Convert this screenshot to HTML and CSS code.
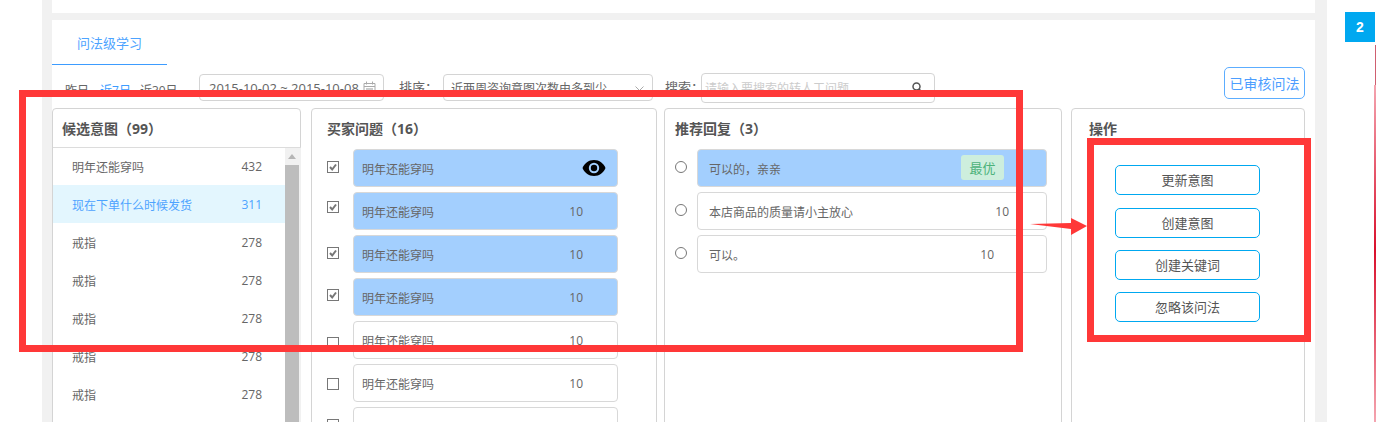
FILE: index.html
```html
<!DOCTYPE html>
<html lang="zh-CN">
<head>
<meta charset="utf-8">
<title>问法级学习</title>
<link rel="stylesheet" href="styles.css">
</head>
<body>
<div class="page">
  <main class="content">
    <div class="top-card"></div>
    <section class="main-card">
      <nav class="tabs"><span class="tab">问法级学习</span></nav>
      <div class="toolbar">
        <div class="ranges"><span>昨日</span><span class="on">近7日</span><span>近30日</span></div>
        <div class="field date">2015-10-02 ~ 2015-10-08
          <svg class="cal" viewBox="0 0 13 13" width="13" height="13"><path d="M1 2.500h11v10H1zM1 5.500h11M3.500 .5v3M9.500 .5v3" fill="none" stroke="#aaa"/><path d="M3 7h7v4H3z" fill="#ccc"/></svg>
        </div>
        <label class="lab sort-lab">排序：</label>
        <div class="field select">近两周咨询意图次数由多到少
          <svg class="chev" viewBox="0 0 9 5" width="9" height="5"><path d="M.5 .5l4 4 4-4" fill="none" stroke="#aaa"/></svg>
        </div>
        <label class="lab search-lab">搜索：</label>
        <div class="field search">请输入要搜索的转人工问题
          <svg class="glass" viewBox="0 0 11 11" width="11" height="11"><circle cx="4.500" cy="4.500" r="3.500" fill="none" stroke="#555" stroke-width="1.500"/><path d="M7 7l3.500 3.500" stroke="#555" stroke-width="1.500"/></svg>
        </div>
        <button class="audited">已审核问法</button>
      </div>
      <div class="panels">
        <section class="panel intents">
          <h3>候选意图（99）</h3>
          <div class="intent-box">
            <ul class="intent-list">
              <li><span>明年还能穿吗</span><b>432</b></li>
              <li class="active"><span>现在下单什么时候发货</span><b>311</b></li>
              <li><span>戒指</span><b>278</b></li>
              <li><span>戒指</span><b>278</b></li>
              <li><span>戒指</span><b>278</b></li>
              <li><span>戒指</span><b>278</b></li>
              <li><span>戒指</span><b>278</b></li>
            </ul>
            <div class="scrollbar"><div class="scroll-up"><i></i></div><div class="thumb"></div></div>
          </div>
        </section>
        <section class="panel questions">
          <h3>买家问题（16）</h3>
          <div class="rows">
            <div class="row"><span class="check"><svg viewBox="0 0 10 10" width="10" height="10"><path d="M2 5l2.200 2.500L8 2.500" fill="none" stroke="#777" stroke-width="2"/></svg></span><div class="item sel"><span>明年还能穿吗</span><svg class="eye" viewBox="0 0 24 18" width="24" height="18"><path d="M12 1C6.500 1 2.500 4.500 .5 9c2 4.500 6 8 11.500 8s9.500-3.500 11.500-8C21.500 4.500 17.500 1 12 1z" fill="#000"/><circle cx="12" cy="9" r="5.200" fill="#a3cffe"/><circle cx="12" cy="9" r="3.200" fill="#000"/></svg></div></div>
            <div class="row"><span class="check"><svg viewBox="0 0 10 10" width="10" height="10"><path d="M2 5l2.200 2.500L8 2.500" fill="none" stroke="#777" stroke-width="2"/></svg></span><div class="item sel"><span>明年还能穿吗</span><b>10</b></div></div>
            <div class="row"><span class="check"><svg viewBox="0 0 10 10" width="10" height="10"><path d="M2 5l2.200 2.500L8 2.500" fill="none" stroke="#777" stroke-width="2"/></svg></span><div class="item sel"><span>明年还能穿吗</span><b>10</b></div></div>
            <div class="row"><span class="check"><svg viewBox="0 0 10 10" width="10" height="10"><path d="M2 5l2.200 2.500L8 2.500" fill="none" stroke="#777" stroke-width="2"/></svg></span><div class="item sel"><span>明年还能穿吗</span><b>10</b></div></div>
            <div class="row"><span class="check"></span><div class="item"><span>明年还能穿吗</span><b>10</b></div></div>
            <div class="row"><span class="check"></span><div class="item"><span>明年还能穿吗</span><b>10</b></div></div>
            <div class="row"><span class="check"></span><div class="item"></div></div>
          </div>
        </section>
        <section class="panel replies">
          <h3>推荐回复（3）</h3>
          <div class="rows">
            <div class="row"><span class="radio"></span><div class="item sel"><span>可以的，亲亲</span><em class="best">最优</em></div></div>
            <div class="row"><span class="radio"></span><div class="item"><span>本店商品的质量请小主放心</span><b>10</b></div></div>
            <div class="row"><span class="radio"></span><div class="item short"><span>可以。</span><b>10</b></div></div>
          </div>
        </section>
        <section class="panel actions">
          <h3>操作</h3>
          <div class="buttons">
            <button>更新意图</button>
            <button>创建意图</button>
            <button>创建关键词</button>
            <button>忽略该问法</button>
          </div>
        </section>
      </div>
    </section>
  </main>
  <aside class="rail">
    <div class="step">2</div>
    <div class="line"></div>
  </aside>
</div>
<div class="mark mark-a"></div>
<div class="mark mark-b"></div>
<svg class="arrow" viewBox="0 0 58 18" width="58" height="18"><path d="M0 6L41 5V0L57 8 41 17V11z" fill="#ff3838"/></svg>
</body>
</html>
```
FILE: styles.css
```css
* { box-sizing: border-box; }
html, body { margin: 0; height: 422px; overflow: hidden; background: #fff; }
body { position: relative; font: 12px/1.4 "Open Sans", "Noto Sans CJK SC", sans-serif; color: #666; }
ul, h3 { margin: 0; padding: 0; }
li { list-style: none; }
.page { display: flex; height: 422px; padding-left: 42px; }

.content { width: 1285px; background: #f1f1f1; padding: 0 12px 0 10px; display: flex; flex-direction: column; }
.top-card { height: 13px; background: #fff; flex: none; }
.main-card { margin-top: 7px; flex: 1; background: #fff; padding-right: 10px; overflow: hidden; }

.tabs { height: 45px; }
.tab { display: block; width: 115px; height: 45px; padding: 14px 0 0 25px; border-bottom: 1px solid #3d9cff; color: #4da3ff; font-size: 13px; line-height: 18px; }

.toolbar { height: 43px; display: flex; align-items: flex-start; font-size: 12px; }
.ranges { display: flex; gap: 9px; margin: 17px 0 0 13px; width: 134px; color: #666; line-height: 17px; }
.ranges span:first-child { margin-right: 2px; }
.ranges .on { color: #3d9cff; }
.field { position: relative; border: 1px solid #d4d4d4; border-radius: 4px; margin-top: 9px; height: 27px; line-height: 27px; white-space: nowrap; flex: none; }
.date { width: 185px; padding-left: 9px; font-size: 13px; color: #666; }
.cal { position: absolute; right: 7px; top: 6px; }
.lab { flex: none; margin-top: 13px; font-size: 13px; line-height: 18px; color: #666; white-space: nowrap; }
.sort-lab { margin-left: 15px; width: 44px; }
.select { width: 210px; padding-left: 7px; }
.chev { position: absolute; right: 8px; top: 11px; }
.search-lab { margin-left: 12px; width: 36px; }
.search { width: 234px; height: 30px; margin-top: 8px; padding-left: 3px; line-height: 30px; color: #ccc; }
.glass { position: absolute; right: 11px; top: 8px; }
.audited { margin: 2px 0 0 auto; width: 81px; height: 32px; padding: 0; background: #fff; border: 1px solid #5cadff; border-radius: 5px; color: #4d9eff; font: 14px/30px "Noto Sans CJK SC", sans-serif; }

.panels { display: flex; height: 400px; }
.panel { border: 1px solid #d4d4d4; border-radius: 4px; flex: none; background: #fff; }
.panel h3 { font-size: 14px; font-weight: 700; line-height: 20px; color: #555; }
.intents { width: 249px; }
.questions { width: 346px; margin-left: 10px; }
.replies { width: 398px; margin-left: 7px; }
.actions { width: 234px; margin-left: 9px; }
.intents h3 { padding: 10px 0 0 9px; height: 38px; }
.questions h3, .replies h3 { padding: 10px 0 0 15px; height: 40px; }
.replies h3 { padding-left: 10px; }
.actions h3 { padding: 10px 0 0 17px; height: 56px; }

.intent-box { display: flex; height: 300px; border-top: 1px solid #dcdcdc; margin-right: -1px; overflow: hidden; }
.intent-list { width: 232px; flex: none; }
.intent-list li { height: 38px; display: flex; justify-content: space-between; align-items: center; padding: 2px 23px 0 19px; color: #666; }
.intent-list li:first-child { height: 37px; }
.intent-list li span, .item span { font-family: "Noto Sans CJK SC", sans-serif; }
.intent-list b, .item b { font-weight: 400; font-size: 12px; }
.intent-list li.active { background: #e3f6fe; color: #4da3ff; }
.scrollbar { width: 16px; background: #f1f1f1; flex: none; padding-right: 2px; }
.scroll-up { height: 17px; display: flex; justify-content: center; padding-top: 6px; }
.scroll-up i { width: 0; height: 0; border: 4px solid transparent; border-top: 0; border-bottom: 5px solid #b5b5b5; }
.thumb { height: 283px; background: #bdbdbd; }

.rows { display: flex; flex-direction: column; gap: 5px; }
.row { display: flex; align-items: flex-start; height: 38px; }
.questions .row { padding-left: 15px; }
.replies .row { padding-left: 10px; }
.check { flex: none; width: 12px; height: 12px; margin-top: 12px; border: 1px solid #777; background: #fff; display: flex; }
.row:nth-child(2) .check { margin-top: 9px; }
.row:nth-child(3) .check { margin-top: 12px; }
.row:nth-child(4) .check { margin-top: 11px; }
.row:nth-child(5) .check { margin-top: 16px; }
.row:nth-child(6) .check { margin-top: 14px; }
.row:nth-child(7) .check { margin-top: 12px; }
.radio { flex: none; width: 12px; height: 12px; margin-top: 12px; border: 1px solid #777; border-radius: 50%; }
.item { height: 38px; margin-left: 14px; border: 1px solid #d8d8d8; border-radius: 4px; display: flex; align-items: center; position: relative; background: #fff; color: #666; padding-top: 2px !important; }
.item.sel { background: #a3cffe; }
.questions .item { width: 265px; padding: 0 34px 0 8px; justify-content: space-between; }
.replies .item { width: 350px; margin-left: 10px; padding: 0 37px 0 11px; justify-content: space-between; }
.replies .item.short { padding-right: 52px; }
.replies .item.sel { padding-right: 42px; }
.eye { position: absolute; right: 11px; top: 9px; }
.best { width: 43px; height: 25px; margin-top: -3px; border-radius: 3px; background: #cdeedd; color: #4cb27a; font: 13px/25px "Noto Sans CJK SC", sans-serif; text-align: center; }

.buttons { display: flex; flex-direction: column; align-items: center; padding-right: 1px; }
.buttons button { width: 145px; height: 30px; margin-bottom: 12px; padding: 0; background: #fff; border: 1px solid #00a8f0; border-radius: 5px; color: #555; font: 13px/28px "Noto Sans CJK SC", sans-serif; }
.buttons button:first-child { margin-bottom: 13px; }

.rail { flex: 1; position: relative; padding: 12px 0 0 18px; }
.step { width: 30px; height: 30px; background: #00a8f0; color: #fff; font: 700 14px/30px "Liberation Sans", sans-serif; text-align: center; }
.line { position: absolute; left: 47px; top: 85px; width: 2px; bottom: 0; background: linear-gradient(#f4a5b0, #d9102c 49%, #f4a5b0); }
.line::before { content: ""; position: absolute; left: 1px; top: -40px; width: 1px; height: 40px; background: #cf5f70; }

.mark { position: absolute; border: 7px solid #ff3838; }
.mark-a { left: 19px; top: 90px; width: 1004px; height: 262px; }
.mark-b { left: 1087px; top: 138px; width: 224px; height: 204px; }
.arrow { position: absolute; left: 1030px; top: 218px; }
```
